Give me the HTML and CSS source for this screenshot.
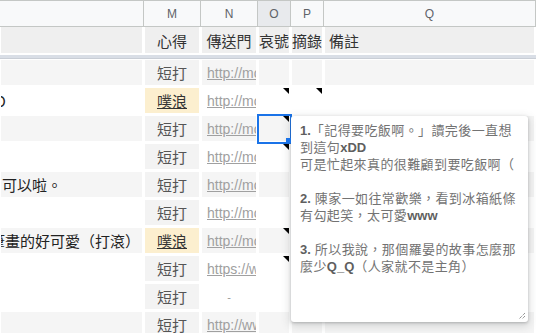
FILE: index.html
```html
<!DOCTYPE html>
<html lang="zh-Hant">
<head>
  <meta charset="UTF-8">
  <title>Sheet</title>
  <link rel="stylesheet" href="styles.css">
</head>
<body>
  <div class="sheet">
    <div class="colhead">
      <div class="hc"></div>
      <div class="hc">M</div>
      <div class="hc">N</div>
      <div class="hc active">O</div>
      <div class="hc">P</div>
      <div class="hc">Q</div>
    </div>

    <div class="row frozen">
      <div class="c"></div>
      <div class="c mid">心得</div>
      <div class="c mid">傳送門</div>
      <div class="c mid">哀號</div>
      <div class="c mid">摘錄</div>
      <div class="c left">備註</div>
    </div>
    <div class="freeze-bar"></div>

    <div class="row band">
      <div class="c"></div>
      <div class="c tag">短打</div>
      <div class="c link">http://mo</div>
      <div class="c"></div>
      <div class="c"></div>
      <div class="c"></div>
    </div>
    <div class="row">
      <div class="c txt"><span class="shift-b">XD</span></div>
      <div class="c tag plurk">噗浪</div>
      <div class="c link">http://mo</div>
      <div class="c noted"></div>
      <div class="c noted"></div>
      <div class="c"></div>
    </div>
    <div class="row band">
      <div class="c"></div>
      <div class="c tag">短打</div>
      <div class="c link">http://mo</div>
      <div class="c noted selected"></div>
      <div class="c"></div>
      <div class="c"></div>
    </div>
    <div class="row">
      <div class="c"></div>
      <div class="c tag">短打</div>
      <div class="c link">http://mo</div>
      <div class="c noted"></div>
      <div class="c"></div>
      <div class="c"></div>
    </div>
    <div class="row band">
      <div class="c txt"><span class="shift-e">可以啦。</span></div>
      <div class="c tag">短打</div>
      <div class="c link">http://mo</div>
      <div class="c"></div>
      <div class="c"></div>
      <div class="c"></div>
    </div>
    <div class="row">
      <div class="c"></div>
      <div class="c tag">短打</div>
      <div class="c link">http://mo</div>
      <div class="c"></div>
      <div class="c"></div>
      <div class="c"></div>
    </div>
    <div class="row band">
      <div class="c txt"><span class="shift-g">筆畫的好可愛（打滾）</span></div>
      <div class="c tag plurk">噗浪</div>
      <div class="c link">http://mo</div>
      <div class="c noted"></div>
      <div class="c"></div>
      <div class="c"></div>
    </div>
    <div class="row">
      <div class="c"></div>
      <div class="c tag">短打</div>
      <div class="c link">https://w</div>
      <div class="c noted"></div>
      <div class="c"></div>
      <div class="c"></div>
    </div>
    <div class="row">
      <div class="c"></div>
      <div class="c tag">短打</div>
      <div class="c dash">-</div>
      <div class="c"></div>
      <div class="c"></div>
      <div class="c"></div>
    </div>
    <div class="row band">
      <div class="c"></div>
      <div class="c tag">短打</div>
      <div class="c link">http://ww</div>
      <div class="c"></div>
      <div class="c"></div>
      <div class="c"></div>
    </div>

    <div class="note">
      <p><b>1.</b>「記得要吃飯啊。」讀完後一直想到這句<b>xDD</b><br>可是忙起來真的很難顧到要吃飯啊（</p>
      <p><b>2.</b> 陳家一如往常歡樂，看到冰箱紙條有勾起笑，太可愛<b>www</b></p>
      <p><b>3.</b> 所以我說，那個羅晏的故事怎麼那麼少<b>Q_Q</b>（人家就不是主角）</p>
      <svg class="grip" width="8" height="8" viewBox="0 0 8 8">
        <path d="M7 1L1 7M7 4L4 7" stroke="#666" stroke-width="1" stroke-dasharray="1 1" fill="none"/>
      </svg>
    </div>
  </div>
</body>
</html>
```

FILE: styles.css
```css
body {
  margin: 0;
  overflow: hidden;
  background: #ffffff;
  font-family: "Liberation Sans", Arial, "Noto Sans CJK TC", sans-serif;
}
.sheet {
  position: relative;
  width: 536px;
  height: 333px;
  overflow: hidden;
}
.colhead,
.row {
  display: grid;
  grid-template-columns: 144px 57px 57px 33px 33px 1fr;
}
.colhead {
  height: 27px;
  border-top: 1px solid #c4c7c5;
  box-sizing: border-box;
  background: #f8f9fa;
}
.hc {
  display: flex;
  align-items: center;
  justify-content: center;
  border-right: 1px solid #c4c7c5;
  border-bottom: 1px solid #c4c7c5;
  font-size: 12px;
  color: #5f6368;
}
.hc.active {
  background: #e8eaed;
}

.row {
  height: 28px;
}
.c {
  position: relative;
  box-sizing: border-box;
  border-left: 1px solid #fff;
  border-right: 2px solid #fff;
  border-top: 1px solid #fff;
  border-bottom: 2px solid #fff;
  display: flex;
  align-items: center;
  overflow: hidden;
  white-space: nowrap;
  font-size: 15px;
  font-family: "Noto Sans CJK TC", sans-serif;
  color: #222;
}
.row.band .c {
  background: #f5f5f5;
}

.frozen {
  height: 28px;
}
.frozen .c {
  border-top: 0;
  background: #efefef;
  color: #333;
}
.c.mid {
  justify-content: center;
}
.c.left {
  padding-left: 4px;
}
.freeze-bar {
  height: 4px;
  background: #d9dee6;
  border-bottom: 1px solid #c9ced6;
  box-sizing: border-box;
}

.row .c.tag {
  justify-content: center;
  background: #f3f3f3;
  color: #555;
}
.row .c.tag.plurk {
  background: #fcefcf;
  color: #333;
  text-decoration: underline;
}
.c.link {
  padding-left: 5px;
  font-family: "Liberation Sans", Arial, sans-serif;
  font-size: 14px;
  color: #a0a0a0;
  text-decoration: underline;
}
.c.dash {
  justify-content: center;
  font-family: "Liberation Sans", Arial, sans-serif;
  font-size: 11px;
  color: #999;
}
.shift-b {
  margin-left: -14px;
}
.shift-e {
  margin-left: 1px;
}
.shift-g {
  margin-left: -11px;
}

/* note marker */
.c.noted::after {
  content: "";
  position: absolute;
  top: 0;
  right: 0;
  border-top: 6px solid #000;
  border-left: 6px solid transparent;
}
.c.selected {
  overflow: visible;
}
.c.selected::before {
  content: "";
  position: absolute;
  left: -2px;
  top: -2px;
  right: -3px;
  bottom: -3px;
  border: 2px solid #1a73e8;
  z-index: 2;
}
.c.selected::after {
  z-index: 3;
}

.note {
  position: absolute;
  left: 291px;
  top: 116px;
  width: 237px;
  height: 206px;
  box-sizing: border-box;
  padding: 6px 9px 0 9px;
  background: #fff;
  border-radius: 3px;
  box-shadow: 0 1px 3px rgba(60, 64, 67, 0.3), 0 3px 8px 2px rgba(60, 64, 67, 0.15);
  font-family: "Liberation Sans", Arial, "Noto Sans CJK TC", sans-serif;
  font-size: 13px;
  line-height: 17px;
  letter-spacing: 0.4px;
  color: #737373;
  z-index: 5;
}
.note p {
  margin: 0 0 17px;
}
.note b {
  color: #5f5f5f;
  letter-spacing: 0;
}
.note::before {
  content: "";
  position: absolute;
  left: -5px;
  top: 22px;
  width: 5px;
  height: 5px;
  background: #1a73e8;
}
.grip {
  position: absolute;
  right: 2px;
  bottom: 2px;
}
```
